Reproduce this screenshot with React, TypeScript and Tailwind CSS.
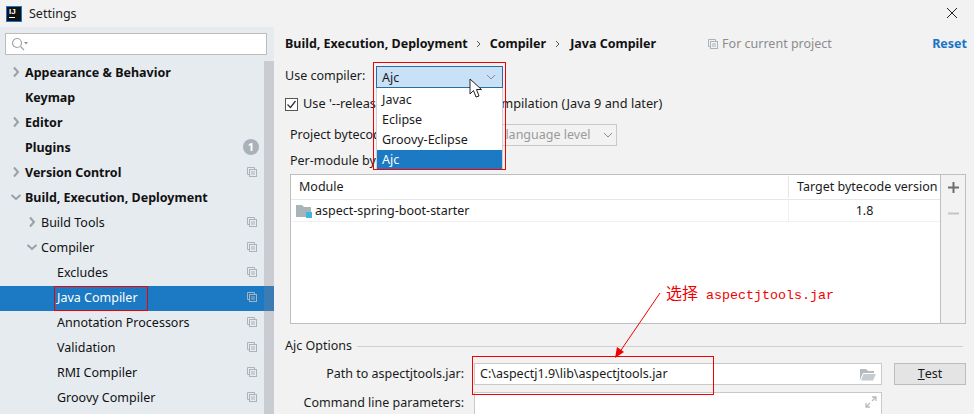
const F = "font-['Noto_Sans','Noto_Sans_CJK_SC',sans-serif]";

function CopyIcon({ className = "" }: { className?: string }) {
  return (
    <svg width="10" height="10" viewBox="0 0 10 10" fill="none" stroke="#a9b3b9" strokeWidth="1" className={className}>
      <path d="M2.5 7.5H0.5V0.5H7.5V2.5" />
      <rect x="2.5" y="2.5" width="7" height="7" />
      <path d="M4 5H8M4 7H8" />
    </svg>
  );
}

function Chevron({ dir }: { dir: "right" | "down" }) {
  return (
    <svg width="12" height="12" viewBox="0 0 12 12" fill="none" stroke="#9aa0a5" strokeWidth="2">
      {dir === "right" ? <path d="M4 1.5L8 6L4 10.5" /> : <path d="M1.5 4L6 8L10.5 4" />}
    </svg>
  );
}

type Row = { label: string; indent: number; bold?: boolean; chev?: "right" | "down"; copy?: boolean; badge?: boolean; sel?: boolean };
const rows: Row[] = [
  { label: "Appearance & Behavior", indent: 0, bold: true, chev: "right" },
  { label: "Keymap", indent: 0, bold: true },
  { label: "Editor", indent: 0, bold: true, chev: "right" },
  { label: "Plugins", indent: 0, bold: true, badge: true },
  { label: "Version Control", indent: 0, bold: true, chev: "right", copy: true },
  { label: "Build, Execution, Deployment", indent: 0, bold: true, chev: "down" },
  { label: "Build Tools", indent: 1, chev: "right", copy: true },
  { label: "Compiler", indent: 1, chev: "down", copy: true },
  { label: "Excludes", indent: 2, copy: true },
  { label: "Java Compiler", indent: 2, copy: true, sel: true },
  { label: "Annotation Processors", indent: 2, copy: true },
  { label: "Validation", indent: 2, copy: true },
  { label: "RMI Compiler", indent: 2, copy: true },
  { label: "Groovy Compiler", indent: 2, copy: true },
];

function TreeRow({ r }: { r: Row }) {
  const pad = r.indent === 0 ? "pl-[25px]" : r.indent === 1 ? "pl-[41px]" : "pl-[57px]";
  const chevPos = r.indent === 0 ? "left-[10px]" : "left-[26px]";
  return (
    <div className={`relative h-[25px] flex items-center ${pad} pr-[7px] ${r.sel ? "bg-[#1b7ac3] text-white" : "text-[#111]"}`}>
      {r.chev && <span className={`absolute ${chevPos} top-[5px] flex`}><Chevron dir={r.chev} /></span>}
      <span className={`flex-1 whitespace-nowrap text-[12.5px] pb-[1px] ${r.bold ? "font-bold" : ""}`}>{r.label}</span>
      {r.copy && <CopyIcon className="-mt-[3px]" />}
      {r.badge && (
        <span className="w-4 h-4 -mr-[2px] -mt-[3px] rounded-full bg-[#aab2b9] text-white text-[11px] font-bold flex items-center justify-center">1</span>
      )}
      {r.sel && <span className="absolute left-[54px] top-0 w-[94px] h-[25px] border border-[#f00000]" />}
    </div>
  );
}

function Sidebar() {
  return (
    <div className="w-[274px] h-[387px] bg-[#e6ebf0] flex flex-col overflow-hidden">
      <div className="pl-[5px] pr-[7px] pt-[6px] pb-[6px]">
        <div className="h-[22px] bg-white border border-[#bdbdbd] flex items-center pl-[5px]">
          <svg width="18" height="14" viewBox="0 0 18 14" fill="none" stroke="#a0a4a8" strokeWidth="1.2">
            <circle cx="6" cy="6" r="4.5" />
            <path d="M9.5 9.5L13 13" />
            <path d="M13 5H17L15 7.5Z" fill="#8d9195" stroke="none" />
          </svg>
        </div>
      </div>
      <div className="flex flex-1 min-h-0">
        <div className="w-[264px]">
          {rows.map((r) => <TreeRow key={r.label} r={r} />)}
        </div>
        <div className="w-[10px] bg-[#c9cdd2]">
          <div className="h-[225px]" />
          <div className="h-[25px] bg-[#3a7cb3]" />
        </div>
      </div>
    </div>
  );
}

function Main() {
  return (
    <div className="relative flex-1 h-[387px] bg-[#f2f2f2] pl-[11px] pr-[8px] text-[12.5px] text-[#1a1a1a]">
      <div className="h-[32px] flex items-center font-bold text-[#111] mt-[1px] whitespace-nowrap">
        <span>Build, Execution, Deployment</span>
        <svg width="8" height="10" viewBox="0 0 8 10" fill="none" stroke="#555" strokeWidth="1" className="mx-[7px]"><path d="M2 2l3 3-3 3" /></svg>
        <span>Compiler</span>
        <svg width="8" height="10" viewBox="0 0 8 10" fill="none" stroke="#555" strokeWidth="1" className="mx-[8px]"><path d="M2 2l3 3-3 3" /></svg>
        <span>Java Compiler</span>
        <span className="ml-[52px] flex items-center gap-[4px] font-normal text-[#8c8c8c]"><CopyIcon />For current project</span>
        <span className="ml-auto font-bold text-[#1b74c5] mr-[-1px]">Reset</span>
      </div>

      <div className="h-[22px] mt-[5px] flex items-center whitespace-nowrap">Use compiler:</div>

      <div className="h-[22px] mt-[6px] flex items-center gap-[5px] whitespace-nowrap">
        <span className="w-[13px] h-[13px] bg-white border border-[#555] flex items-center justify-center">
          <svg width="11" height="11" viewBox="0 0 11 11" fill="none" stroke="#333" strokeWidth="1.3"><path d="M1.5 5.5L4.5 8.5L9.5 2" /></svg>
        </span>
        <span className="text-[12.75px]">Use '--release' option for cross-compilation (Java 9 and later)</span>
      </div>

      <div className="h-[22px] mt-[9px] ml-[5px] flex items-center whitespace-nowrap">
        <span>Project bytecode version:</span>
        <span className="ml-[11px] w-[169px] h-[22px] border border-[#c9c9c9] flex items-center justify-end pr-[3px] text-[#9a9a9a] gap-[13px]">
          Same as language level
          <svg width="10" height="6" viewBox="0 0 10 6" fill="none" stroke="#8c8c8c"><path d="M1 1l4 4 4-4" /></svg>
        </span>
      </div>

      <div className="h-[20px] mt-[5px] ml-[5px] flex items-center whitespace-nowrap">Per-module bytecode version:</div>

      <div className="mt-[3px] ml-[5px] h-[150px] w-[676px] flex border border-[#bfbfbf] bg-white">
        <div className="flex-1 min-w-0">
          <div className="h-[25px] flex items-center border-b border-[#e6e6e6]">
            <span className="w-[497px] pl-[8px]">Module</span>
            <span className="flex-1 h-[22px] border-l border-[#e6e6e6] pl-[8px] flex items-center whitespace-nowrap">Target bytecode version</span>
          </div>
          <div className="h-[22px] flex items-center border-b border-[#f0f0f0]">
            <span className="w-[497px] pl-[5px] flex items-center gap-[3px]">
              <svg width="16" height="14" viewBox="0 0 16 14">
                <path d="M0 1H6L8 3H15V13H0Z" fill="#a9b3ba" />
                <rect x="10" y="8" width="6" height="6" fill="#40b6e0" />
              </svg>
              <span className="pt-[2px]">aspect-spring-boot-starter</span>
            </span>
            <span className="flex-1 h-[22px] border-l border-[#f0f0f0] flex items-center justify-center pt-[2px]">1.8</span>
          </div>
        </div>
        <div className="w-[25px] bg-[#f2f2f2] border-l border-[#bfbfbf] flex flex-col items-center pt-[7px] gap-[15px]">
          <svg width="11" height="11" viewBox="0 0 11 11" stroke="#6e6e6e" strokeWidth="2"><path d="M5.5 0V11M0 5.5H11" /></svg>
          <svg width="11" height="11" viewBox="0 0 11 11" stroke="#c4c4c4" strokeWidth="2"><path d="M0 5.5H11" /></svg>
        </div>
      </div>

      <div className="mt-[12px] h-[20px] flex items-center gap-[5px]">
        <span>Ajc Options</span>
        <span className="flex-1 h-px bg-[#d0d0d0] mr-[3px]" />
      </div>

      <div className="mt-[7px] h-[22px] flex items-center whitespace-nowrap">
        <span className="w-[179px] text-right">Path to aspectjtools.jar:</span>
        <span className="ml-[10px] w-[408px] h-[22px] bg-white border border-[#c9c9c9] flex items-center pl-[5px] justify-between pr-[5px]">
          C:\aspectj1.9\lib\aspectjtools.jar
          <svg width="16" height="13" viewBox="0 0 16 13"><path d="M0 1H6L8 3H14V5H3L0 12Z" fill="#b4babf" /><path d="M3.5 6H16L13 12.5H1Z" fill="#c6cbcf" /></svg>
        </span>
        <span className="ml-[12px] w-[72px] h-[22px] bg-[#e4e4e4] border border-[#bdbdbd] flex items-center justify-center"><span className="underline">T</span>est</span>
      </div>

      <div className="mt-[7px] h-[22px] flex items-center whitespace-nowrap">
        <span className="w-[179px] text-right pt-[1px]">Command line parameters:</span>
        <span className="ml-[10px] w-[408px] h-[26px] bg-white border border-[#c9c9c9] flex justify-end pt-[3px] pr-[4px] self-start">
          <svg width="12" height="12" viewBox="0 0 12 12" fill="none" stroke="#b6bcc0" strokeWidth="1.3"><path d="M7 1H11V5M11 1L7 5M1 7V11H5M1 11L5 7" /></svg>
        </span>
      </div>

      {/* overlays */}
      <div className="absolute left-[99px] top-[35px] w-[133px] h-[108px] border border-[#f00000] z-20" />
      <div className="absolute left-[102px] top-[39px] w-[127px] z-10 text-[#1a1a1a]">
        <div className="h-[22px] bg-[#c9e1f6] border border-[#2a6c9f] flex items-center justify-between pl-[5px] pr-[6px] pt-[3px]">
          Ajc
          <svg width="10" height="6" viewBox="0 0 10 6" fill="none" stroke="#8c8c8c" className="-mt-[3px]"><path d="M1 1l4 4 4-4" /></svg>
        </div>
        <div className="bg-white border-x border-[#d0d0d0] h-[81px] pt-[2px]">
          <div className="h-[20px] pl-[5px] flex items-center">Javac</div>
          <div className="h-[20px] pl-[5px] flex items-center">Eclipse</div>
          <div className="h-[20px] pl-[5px] flex items-center">Groovy-Eclipse</div>
          <div className="h-[20px] pl-[5px] flex items-center bg-[#1b7ac3] text-white">Ajc</div>
        </div>
      </div>
      <svg width="14" height="21" viewBox="0 0 14 21" className="absolute left-[195px] top-[51px] z-30">
        <path d="M1 1V16L4.5 12.5L7 19L10 18L7.5 11.5H12.5Z" fill="white" stroke="#222" strokeWidth="1" />
      </svg>

      <div className="absolute left-[198px] top-[329px] w-[242px] h-[39px] border border-[#f00000] z-20" />
      <span className="absolute left-[392px] top-[256px] z-20 text-[#f00000] text-[13.33px] whitespace-pre font-['Liberation_Mono','Noto_Sans_CJK_SC',monospace]"><span className="text-[16px]">选择</span> aspectjtools.jar</span>
      <svg width="60" height="80" viewBox="0 0 60 80" className="absolute left-[335px] top-[263px] z-20">
        <path d="M51 3L8 66" stroke="#f00000" strokeWidth="1" />
        <path d="M6 68L8 57L15 62Z" fill="#f00000" />
      </svg>
    </div>
  );
}

export default function App() {
  return (
    <div className={`w-[974px] h-[414px] bg-[#f2f2f2] overflow-hidden ${F}`}>
      <div className="h-[27px] bg-[#f2f2f2] flex items-center pl-[6px] pr-[16px] pt-[1px]">
        <span className="w-4 h-4 bg-[#111] border border-[#1b74c5] text-white text-[8px] leading-[8px] font-bold flex flex-col items-start pl-[2px] pt-[1px] font-['Liberation_Sans',sans-serif]">
          IJ
          <span className="mt-[1px] w-[6px] h-px bg-white" />
        </span>
        <span className="ml-[7px] text-[12.5px] text-[#222]">Settings</span>
        <svg width="12" height="12" viewBox="0 0 12 12" stroke="#222" strokeWidth="1" className="ml-auto -mt-[2px]"><path d="M1 1L11 11M11 1L1 11" /></svg>
      </div>
      <div className="flex">
        <Sidebar />
        <Main />
      </div>
    </div>
  );
}
